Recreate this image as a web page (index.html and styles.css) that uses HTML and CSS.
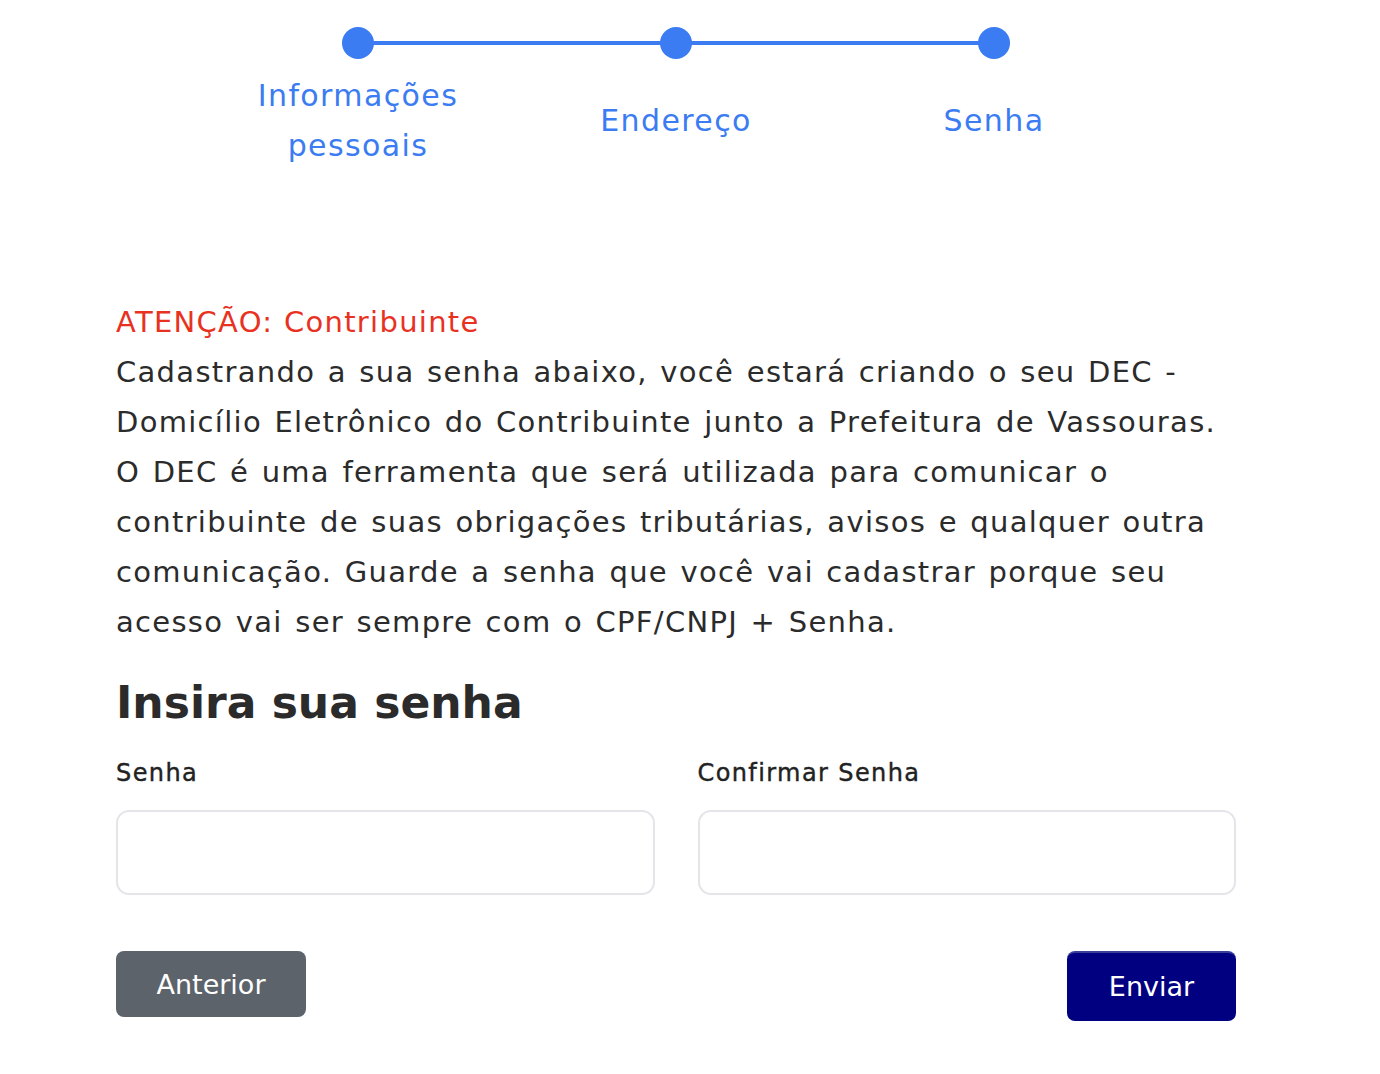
FILE: index.html
```html
<html>
<head>
    <title>Cadastro - Senha</title>
    <meta name="viewport" content="width=device-width, initial-scale=1" />
    <link rel="stylesheet" href="styles.css">
</head>
<body>
<div id="page">
    <div class="stepper">
        <div class="step">
            <span class="dot"></span>
            <span class="step-label">Informações pessoais</span>
        </div>
        <div class="step">
            <span class="dot"></span>
            <span class="step-label">Endereço</span>
        </div>
        <div class="step">
            <span class="dot"></span>
            <span class="step-label">Senha</span>
        </div>
    </div>

    <div class="notice">
        <p class="notice-title">ATENÇÃO: Contribuinte</p>
        <p class="notice-text">Cadastrando a sua senha abaixo, você estará criando o seu DEC - Domicílio Eletrônico do Contribuinte junto a Prefeitura de Vassouras. O DEC é uma ferramenta que será utilizada para comunicar o contribuinte de suas obrigações tributárias, avisos e qualquer outra comunicação. Guarde a senha que você vai cadastrar porque seu acesso vai ser sempre com o CPF/CNPJ + Senha.</p>
    </div>

    <h2 class="form-title">Insira sua senha</h2>

    <div class="fields">
        <div class="field">
            <label for="senha">Senha</label>
            <input type="password" id="senha" />
        </div>
        <div class="field">
            <label for="confirmar">Confirmar Senha</label>
            <input type="password" id="confirmar" />
        </div>
    </div>

    <div class="actions">
        <button class="btn btn-prev">Anterior</button>
        <button class="btn btn-send">Enviar</button>
    </div>
</div>
</body>
</html>
```

FILE: styles.css
```css
body {
    margin: 0;
    background: #fff;
    font-family: "DejaVu Sans", "Noto Sans", sans-serif;
    color: #2b2b2b;
}

#page {
    width: 1120px;
    margin-left: 116px;
    padding-top: 27px;
}

/* step indicator */
.stepper {
    display: grid;
    grid-template-columns: repeat(3, 318px);
    justify-content: center;
    position: relative;
}

.stepper::before {
    /* line between first and last dot */
    content: "";
    position: absolute;
    top: 14px;
    left: 241px;
    right: 241px;
    height: 4px;
    background: #3b7cf2;
}

.step {
    display: flex;
    flex-direction: column;
    align-items: center;
    position: relative;
}

.dot {
    width: 32px;
    height: 32px;
    border-radius: 50%;
    background: #3b7cf2;
}

.step-label {
    width: 250px;
    height: 100px;
    display: flex;
    align-items: center;
    justify-content: center;
    text-align: center;
    margin-top: 12px;
    font-size: 30px;
    line-height: 50px;
    letter-spacing: 1.4px;
    color: #3b7cf2;
}

/* notice */
.notice {
    margin-top: 126px;
}

.notice p {
    margin: 0;
    font-size: 29px;
    line-height: 50px;
}

.notice-title {
    color: #e8321f;
    letter-spacing: 1.3px;
}

.notice-text {
    letter-spacing: 1.3px;
    word-spacing: 2px;
}

.form-title {
    margin: 21px 0 0;
    font-size: 44px;
    font-weight: 600;
    line-height: 70px;
    color: #2b2b2b;
}

.fields {
    display: grid;
    grid-template-columns: 1fr 1fr;
    column-gap: 43px;
    margin-top: 18px;
}

.field label {
    display: block;
    font-size: 24px;
    line-height: 34px;
    letter-spacing: 1.4px;
    color: #222;
    -webkit-text-stroke: 0.4px #222; /* Poppins medium look */
}

.field input {
    display: block;
    width: 100%;
    height: 85px;
    margin-top: 20px;
    box-sizing: border-box;
    border: 2px solid #e3e5e9;
    border-radius: 13px;
    background: #fff;
}

.actions {
    display: flex;
    justify-content: space-between;
    align-items: flex-start;
    margin-top: 56px;
}

.btn {
    border: 0;
    color: #fff;
    font-family: inherit;
    font-size: 27px;
    cursor: pointer;
}

.btn-prev {
    width: 190px;
    height: 66px;
    border-radius: 8px;
    background: #5c636a;
}

.btn-send {
    width: 169px;
    height: 70px;
    padding-bottom: 3px;
    border-radius: 8px;
    background: #000080;
    border-top: 2px solid #3a3f9a;
}
```
